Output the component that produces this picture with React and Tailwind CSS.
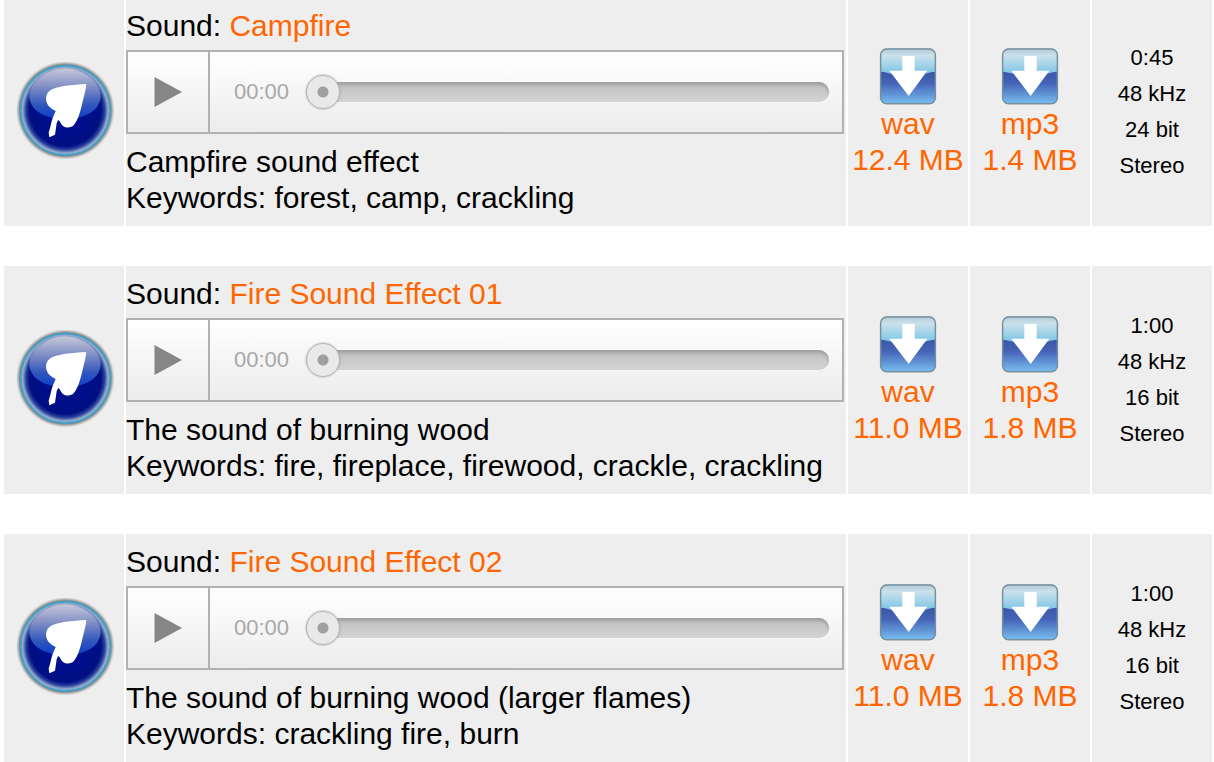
const sounds = [
  {
    title: 'Campfire',
    description: 'Campfire sound effect',
    keywords: 'forest, camp, crackling',
    wav: '12.4 MB',
    mp3: '1.4 MB',
    specs: ['0:45', '48 kHz', '24 bit', 'Stereo'],
  },
  {
    title: 'Fire Sound Effect 01',
    description: 'The sound of burning wood',
    keywords: 'fire, fireplace, firewood, crackle, crackling',
    wav: '11.0 MB',
    mp3: '1.8 MB',
    specs: ['1:00', '48 kHz', '16 bit', 'Stereo'],
  },
  {
    title: 'Fire Sound Effect 02',
    description: 'The sound of burning wood (larger flames)',
    keywords: 'crackling fire, burn',
    wav: '11.0 MB',
    mp3: '1.8 MB',
    specs: ['1:00', '48 kHz', '16 bit', 'Stereo'],
  },
];

const LeafIcon = () => (
  <svg viewBox="12 21 300 300" className="mx-auto block size-[100px]" aria-hidden="true">
    <defs>
      <radialGradient id="leaf-shadow">
        <stop offset="0.9" stopColor="#4a4a4a" stopOpacity="0.95" />
        <stop offset="0.94" stopColor="#666" stopOpacity="0.6" />
        <stop offset="1" stopColor="#999" stopOpacity="0" />
      </radialGradient>
      <radialGradient id="leaf-body">
        <stop offset="0" stopColor="#001096" />
        <stop offset="0.8" stopColor="#000e82" />
        <stop offset="0.88" stopColor="#26409c" />
        <stop offset="0.95" stopColor="#8fa3c8" />
        <stop offset="1" stopColor="#b3c3d6" />
      </radialGradient>
      <linearGradient id="leaf-gloss" x1="0" y1="0" x2="0" y2="1">
        <stop offset="0" stopColor="#c6c9d8" />
        <stop offset="0.35" stopColor="#8490c6" />
        <stop offset="0.7" stopColor="#3358bd" />
        <stop offset="1" stopColor="#0a3fca" />
      </linearGradient>
    </defs>
    <circle cx="166" cy="166" r="148" fill="url(#leaf-shadow)" />
    <circle cx="166" cy="166" r="134" fill="url(#leaf-body)" />
    <path
      d="M165 40C215 40 272 78 272 124C272 164 226 193 165 193C104 193 58 164 58 124C58 78 115 40 165 40Z"
      fill="url(#leaf-gloss)"
    />
    <circle cx="166" cy="166" r="134" fill="none" stroke="#47a0c6" strokeWidth="6" />
    <path
      d="M229 87C188 89 139 93 119 107C103 120 106 144 120 157C126 163 132 165 137 168C130 183 125 196 123 208L116 233L118 247L135 239L140 205L144 196C150 196 150 204 158 212C167 220 184 219 191 211C206 193 212 165 217 144C222 122 227 108 229 87Z"
      fill="#fff"
    />
  </svg>
);

const DownloadIcon = () => (
  <svg viewBox="24 18 180 180" className="mx-auto block size-[60px]" aria-hidden="true">
    <defs>
      <linearGradient id="dl-top" x1="0" y1="0" x2="0" y2="1">
        <stop offset="0" stopColor="#b3ccd8" />
        <stop offset="0.12" stopColor="#cbe1eb" />
        <stop offset="0.48" stopColor="#74c3e6" />
      </linearGradient>
      <linearGradient id="dl-bottom" x1="0" y1="0" x2="0" y2="1">
        <stop offset="0" stopColor="#3a57a8" />
        <stop offset="0.35" stopColor="#4562b6" />
        <stop offset="1" stopColor="#78bdf0" />
      </linearGradient>
    </defs>
    <rect x="29" y="25" width="170" height="169" rx="22" fill="#c2c6c9" />
    <rect x="32" y="27" width="164" height="164" rx="18" fill="url(#dl-top)" />
    <path
      d="M32 95C55 97 70 106 114 106C158 106 173 97 196 95V173Q196 191 178 191H50Q32 191 32 173Z"
      fill="url(#dl-bottom)"
    />
    <rect x="32" y="27" width="164" height="164" rx="18" fill="none" stroke="#74909f" strokeWidth="4" />
    <path d="M97 48H134V92H172L116 168L58 92H97Z" fill="#fff" />
  </svg>
);

const Player = ({ title }) => (
  <div className="mt-1.5 mr-0.5 flex h-[84px] items-center border-2 border-[#b1b1b1] bg-gradient-to-b from-white to-[#ececec]">
    <button
      type="button"
      aria-label={`Play ${title}`}
      className="flex h-full w-[82px] shrink-0 items-center justify-center border-r-2 border-[#b1b1b1]"
    >
      <svg viewBox="0 0 28 30" className="h-[30px] w-7 fill-[#868686]" aria-hidden="true">
        <path d="M0.5 0L28 15L0.5 30Z" />
      </svg>
    </button>
    <span className="ml-6 text-[22px] text-[#a8a8a8]">00:00</span>
    <input
      type="range"
      min="0"
      max="100"
      defaultValue="0"
      aria-label={`Position in ${title}`}
      className="mr-[13px] ml-[17px] h-5 min-w-0 flex-1 appearance-none rounded-full bg-gradient-to-b from-[#bebebe] to-[#d4d4d4] shadow-[inset_0_3px_3px_#a2a2a2] [&::-webkit-slider-thumb]:size-[34px] [&::-webkit-slider-thumb]:appearance-none [&::-webkit-slider-thumb]:rounded-full [&::-webkit-slider-thumb]:border [&::-webkit-slider-thumb]:border-[#b4b4b4] [&::-webkit-slider-thumb]:bg-[radial-gradient(circle,#a0a0a0_0_5px,#e9e9e9_6px)] [&::-webkit-slider-thumb]:shadow-[0_0_2px_#999]"
    />
  </div>
);

const Download = ({ format, size }) => (
  <td className="bg-[#eee] text-center">
    <a href={`#${format}`} className="block whitespace-nowrap text-[#ff6600]">
      <DownloadIcon />
      {format}
      <br />
      {size}
    </a>
  </td>
);

const SoundTable = ({ sound }) => (
  <table className="w-full table-fixed border-separate border-spacing-x-0.5 border-spacing-y-0">
    <colgroup>
      <col className="w-[120px]" />
      <col />
      <col className="w-[120px]" />
      <col className="w-[120px]" />
      <col className="w-[120px]" />
    </colgroup>
    <tbody>
      <tr>
        <td className="bg-[#eee]">
          <LeafIcon />
        </td>
        <td className="bg-[#eee] py-2.5">
          <p>
            Sound: <a href="#sound" className="text-[#ff6600]">{sound.title}</a>
          </p>
          <Player title={sound.title} />
          <p className="mt-2.5">{sound.description}</p>
          <p>Keywords: {sound.keywords}</p>
        </td>
        <Download format="wav" size={sound.wav} />
        <Download format="mp3" size={sound.mp3} />
        <td className="bg-[#eee] text-center text-[22px] leading-9">
          {sound.specs.map((spec) => (
            <p key={spec}>{spec}</p>
          ))}
        </td>
      </tr>
    </tbody>
  </table>
);

const App = () => {
  return (
    <main className="-mt-0.5 flex flex-col gap-10 bg-white pl-0.5 font-['Liberation_Sans',Arial,sans-serif] text-[30px] leading-9 text-black">
      {sounds.map((sound) => (
        <SoundTable key={sound.title} sound={sound} />
      ))}
    </main>
  );
};

export default App;
